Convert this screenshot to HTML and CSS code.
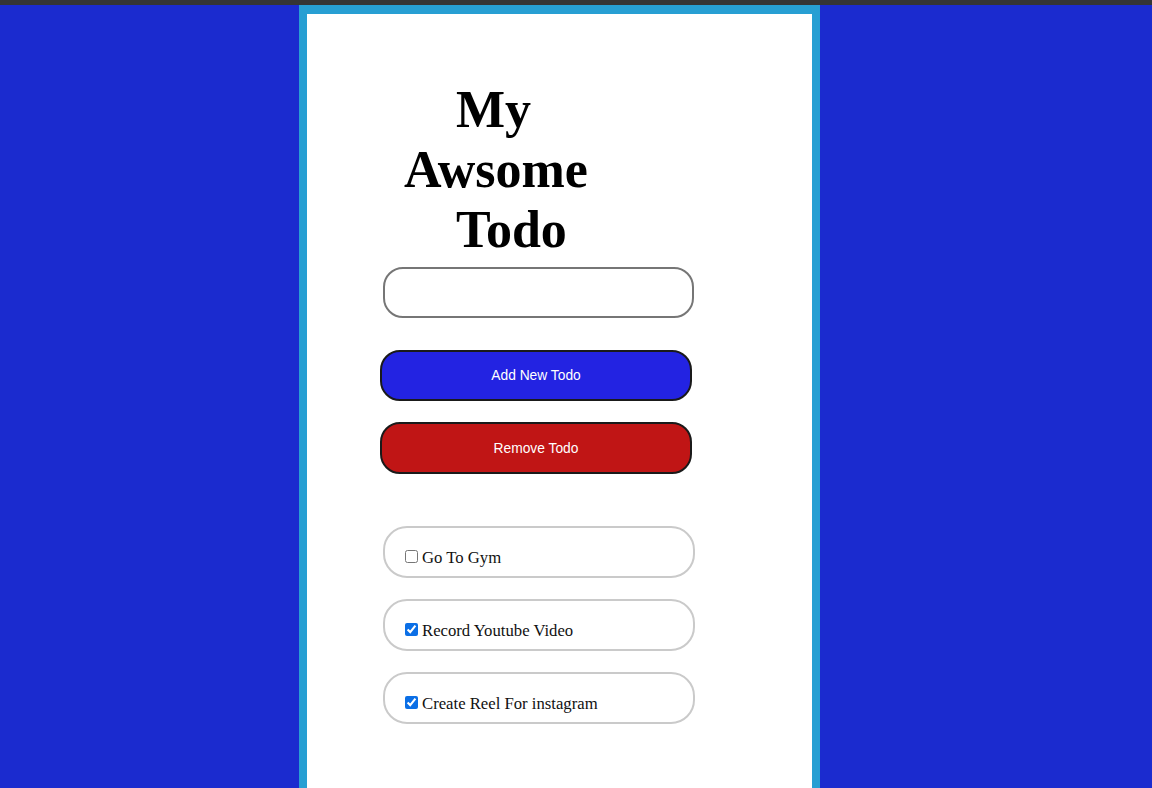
FILE: index.html
```html
<!DOCTYPE html>
<html lang="en">
<head>
<meta charset="utf-8">
<title>My Awsome Todo</title>
<link rel="stylesheet" href="styles.css">
</head>
<body>
<div class="topbar"></div>
<main class="card">
  <h1 class="title">
    <span class="line line-indent">My</span>
    <span class="line">Awsome</span>
    <span class="line line-indent">Todo</span>
  </h1>
  <input class="todo-input" type="text">
  <button class="btn btn-add">Add New Todo</button>
  <button class="btn btn-remove">Remove Todo</button>
  <ul class="todo-list">
    <li class="todo"><label><input type="checkbox">Go To Gym</label></li>
    <li class="todo"><label><input type="checkbox" checked>Record Youtube Video</label></li>
    <li class="todo"><label><input type="checkbox" checked>Create Reel For instagram</label></li>
  </ul>
</main>
</body>
</html>
```
FILE: styles.css
```css
html, body {
  margin: 0;
  padding: 0;
  height: 788px;
  overflow: hidden;
}
body {
  background: #1b2bcf;
  font-family: "Liberation Serif", "Times New Roman", serif;
}
.topbar {
  height: 5px;
  background: #353535;
}
.card {
  margin-left: 299px;
  width: 505px;
  min-height: 900px;
  background: #ffffff;
  border: 8px solid #279fd3;
  border-top-width: 9px;
  border-bottom: none;
  box-sizing: content-box;
  padding-top: 66px;
}
.title {
  margin: 0 0 7px 97px;
  font-size: 52px;
  line-height: 60px;
  font-weight: bold;
  color: #000;
}
.line {
  display: block;
}
.line-indent {
  padding-left: 52px;
}
.todo-input {
  display: block;
  margin: 0 0 32px 76px;
  width: 311px;
  height: 51px;
  box-sizing: border-box;
  border: 2px solid #767676;
  border-radius: 20px;
  background: #fff;
}
.btn {
  display: block;
  margin-left: 73px;
  width: 312px;
  height: 51px;
  box-sizing: border-box;
  border: 2px solid #1a1a1a;
  border-radius: 20px;
  color: #fff;
  font-family: "Liberation Sans", Arial, sans-serif;
  font-size: 13.8px;
}
.btn-add {
  background: #2323e2;
  margin-bottom: 21px;
}
.btn-remove {
  background: #c01515;
  height: 52px;
  margin-bottom: 52px;
}
.todo-list {
  list-style: none;
  margin: 0;
  padding: 0;
}
.todo {
  margin: 0 0 21px 76px;
  width: 312px;
  height: 52px;
  box-sizing: border-box;
  border: 2px solid #cacaca;
  border-radius: 24px;
  padding: 19px 0 0 16px;
  font-size: 16.7px;
  color: #111;
}
.todo input {
  margin: 3px 4px 3px 4px;
  accent-color: #0b6fe6;
}
```
